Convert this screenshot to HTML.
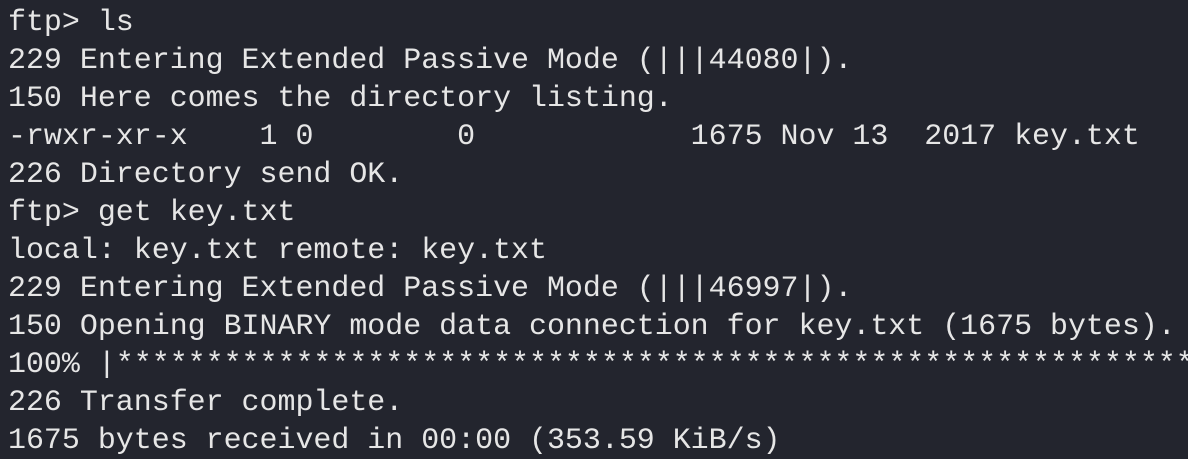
<!DOCTYPE html>
<html><head><style>
html,body{margin:0;padding:0;background:#23252e;width:1188px;height:458px;overflow:hidden}
pre{margin:0;position:absolute;left:8px;top:3px;font-family:"Liberation Mono","DejaVu Sans Mono",monospace;font-size:29.95px;line-height:38px;color:#e6e6e6;white-space:pre}
</style></head><body>
<pre>ftp&gt; ls
229 Entering Extended Passive Mode (|||44080|).
150 Here comes the directory listing.
-rwxr-xr-x    1 0        0            1675 Nov 13  2017 key.txt
226 Directory send OK.
ftp&gt; get key.txt
local: key.txt remote: key.txt
229 Entering Extended Passive Mode (|||46997|).
150 Opening BINARY mode data connection for key.txt (1675 bytes).
100% |*************************************************************
226 Transfer complete.
1675 bytes received in 00:00 (353.59 KiB/s)</pre>
</body></html>
